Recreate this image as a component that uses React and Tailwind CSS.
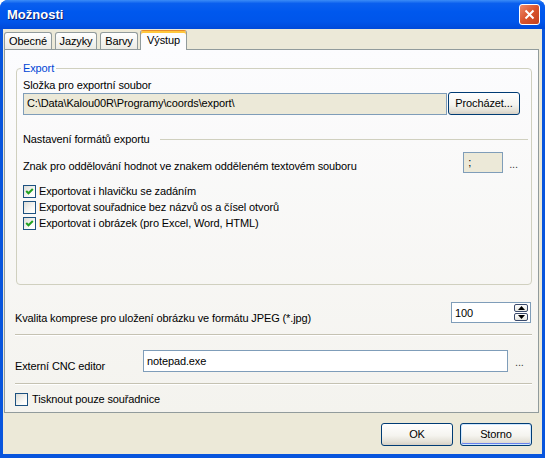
import React from "react";

const Checkbox = ({ checked }) => (
  <span className="w-[13px] h-[13px] shrink-0 border border-[#1c5180] bg-[linear-gradient(135deg,#dcdcd7,#fbfbf9_70%,#ffffff)] flex items-center justify-center">
    {checked && (
      <svg width="9" height="9" viewBox="0 0 9 9">
        <path d="M1.2 4 L3.5 6.3 L7.8 2" fill="none" stroke="#21a121" strokeWidth="2" />
      </svg>
    )}
  </span>
);

const XpButton = ({ children, focused, className = "" }) => (
  <button
    className={`h-[23px] w-[72px] shrink-0 rounded-[3px] border border-[#003c74] bg-[linear-gradient(to_bottom,#ffffff,#f5f4ef_55%,#e3e0d6_85%,#d6d0c5)] font-normal text-[11px] text-black ${
      focused ? "shadow-[inset_0_0_0_1px_#cee7ff,inset_0_-1px_0_1px_#6982ee]" : ""
    } ${className}`}
  >
    {children}
  </button>
);

const tabs = [
  { name: "Obecné", w: "w-[48px]" },
  { name: "Jazyky", w: "w-[42px]" },
  { name: "Barvy", w: "w-[38px]" },
];

export default function App() {
  return (
    <div className="w-[545px] h-[458px] flex flex-col bg-[#0855dd] rounded-t-[8px] overflow-hidden font-['Liberation_Sans',Arial,sans-serif] text-[11px] leading-[13px] tracking-[-0.12px] text-black">
      {/* title bar */}
      <div className="h-[29px] shrink-0 flex items-center justify-between pl-[7px] pr-[5px] bg-[linear-gradient(to_bottom,#3b8cf7_0%,#0a5fee_12%,#0058ee_40%,#0055ea_75%,#0049d9_100%)]">
        <span className="text-white font-bold text-[13px] tracking-normal [text-shadow:1px_1px_0_#0a1e6e]">Možnosti</span>
        <div className="w-[21px] h-[21px] rounded-[3px] border border-white bg-[linear-gradient(135deg,#ee8a6a,#d9532c_50%,#c4401e)] flex items-center justify-center">
          <svg width="11" height="11" viewBox="0 0 11 11">
            <path d="M1.5 1.5 L9.5 9.5 M9.5 1.5 L1.5 9.5" stroke="#ffffff" strokeWidth="2" />
          </svg>
        </div>
      </div>

      {/* body */}
      <div className="flex-1 mx-[3px] mb-[4px] bg-[#ece9d8] flex flex-col pt-[1px]">
        {/* tab strip */}
        <div className="h-[20px] flex items-end gap-[3px] ml-[1px] relative z-10">
          {tabs.map((t) => (
            <div
              key={t.name}
              className={`${t.w} h-[17px] mb-[1px] rounded-t-[3px] border border-b-0 border-[#919b9c] bg-[linear-gradient(to_bottom,#ffffff,#f3f3ef_60%,#ecebe5)] flex items-center justify-center`}
            >
              {t.name}
            </div>
          ))}
          <div className="w-[47px] h-[20px] -ml-[1px] rounded-t-[3px] border border-b-0 border-x-[#919b9c] border-t-[#e68b2c] bg-[#fcfcfe] shadow-[inset_0_2px_0_#ffc73c] flex items-start justify-center pt-[3px]">
            Výstup
          </div>
        </div>

        {/* tab page */}
        <div className="-mt-[1px] ml-[1px] mr-[3px] border border-[#919b9c] bg-[linear-gradient(to_bottom,#fcfcfe,#f4f3ee)] pl-[10px] pr-[6px] pb-[5px] flex flex-col">
          <fieldset className="mt-[12px] ml-[1px] border border-[#d0d0bf] rounded-[4px] pl-[6px] pr-[11px] pb-[53px]">
            <legend className="-ml-[2px] px-[2px] text-[#0046d5]">Export</legend>
            <div className="mt-[4px]">Složka pro exportní soubor</div>
            <div className="h-[23px] flex items-center">
              <div className="flex-1 h-[22px] border border-[#7f9db9] bg-[#ece9d8] flex items-center pl-[3px]">
                C:\Data\Kalou00R\Programy\coords\export\
              </div>
              <XpButton className="ml-[1px]">Procházet...</XpButton>
            </div>
            <div className="mt-[18px] flex items-center -mr-[8px]">
              <span>Nastavení formátů exportu</span>
              <div className="flex-1 ml-[10px] h-px bg-[#d0d0bf]" />
            </div>
            <div className="mt-[6px] h-[21px] flex items-end">
              <span>Znak pro oddělování hodnot ve znakem odděleném textovém souboru</span>
              <div className="ml-auto w-[40px] h-[21px] border border-[#7f9db9] bg-[#ece9d8] flex items-center pl-[4px] self-start">
                ;
              </div>
              <span className="ml-[6px] mr-[2px] text-[#444] self-center pt-[3px]">...</span>
            </div>
            <div className="mt-[10px] flex flex-col">
              <label className="h-[16px] flex items-center gap-[3px]">
                <Checkbox checked />
                <span>Exportovat i hlavičku se zadáním</span>
              </label>
              <label className="h-[16px] flex items-center gap-[3px]">
                <Checkbox />
                <span>Exportovat souřadnice bez názvů os a čísel otvorů</span>
              </label>
              <label className="h-[16px] flex items-center gap-[3px]">
                <Checkbox checked />
                <span>Exportovat i obrázek (pro Excel, Word, HTML)</span>
              </label>
            </div>
          </fieldset>

          <div className="mt-[17px] h-[21px] flex items-end">
            <span className="mb-[-2px]">Kvalita komprese pro uložení obrázku ve formátu JPEG (*.jpg)</span>
            <div className="ml-auto mr-[1px] w-[80px] h-[21px] self-start border border-[#7f9db9] bg-white flex items-center justify-between pl-[3px] pr-[2px]">
              <span className="pt-[1px]">100</span>
              <div className="w-[14px] h-[17px] flex flex-col gap-[1px]">
                <div className="flex-1 rounded-[2px] border border-[#3b4a6b] bg-[linear-gradient(to_bottom,#ffffff,#e6e6e0)] flex items-center justify-center">
                  <svg width="7" height="4" viewBox="0 0 7 4"><path d="M0 4 L3.5 0 L7 4 Z" fill="#000" /></svg>
                </div>
                <div className="flex-1 rounded-[2px] border border-[#3b4a6b] bg-[linear-gradient(to_bottom,#ffffff,#e6e6e0)] flex items-center justify-center">
                  <svg width="7" height="4" viewBox="0 0 7 4"><path d="M0 0 L7 0 L3.5 4 Z" fill="#000" /></svg>
                </div>
              </div>
            </div>
          </div>

          <div className="mt-[11px] h-px bg-[#c5c2b2]" />
          <div className="h-px bg-white" />

          <div className="mt-[14px] h-[22px] flex items-end">
            <span className="w-[128px] shrink-0 mb-[-1px]">Externí CNC editor</span>
            <div className="w-[365px] h-[22px] self-start border border-[#7f9db9] bg-white flex items-center pl-[3px]">
              notepad.exe
            </div>
            <span className="ml-[7px] text-[#444] self-center pt-[3px]">...</span>
          </div>

          <div className="mt-[11px] h-px bg-[#c5c2b2]" />
          <div className="h-px bg-white" />

          <label className="mt-[6px] h-[16px] flex items-center gap-[4px]">
            <Checkbox />
            <span>Tisknout pouze souřadnice</span>
          </label>
        </div>

        {/* dialog buttons */}
        <div className="mt-[10px] flex justify-end gap-[7px] pr-[10px]">
          <XpButton>OK</XpButton>
          <XpButton focused>Storno</XpButton>
        </div>
      </div>
    </div>
  );
}
